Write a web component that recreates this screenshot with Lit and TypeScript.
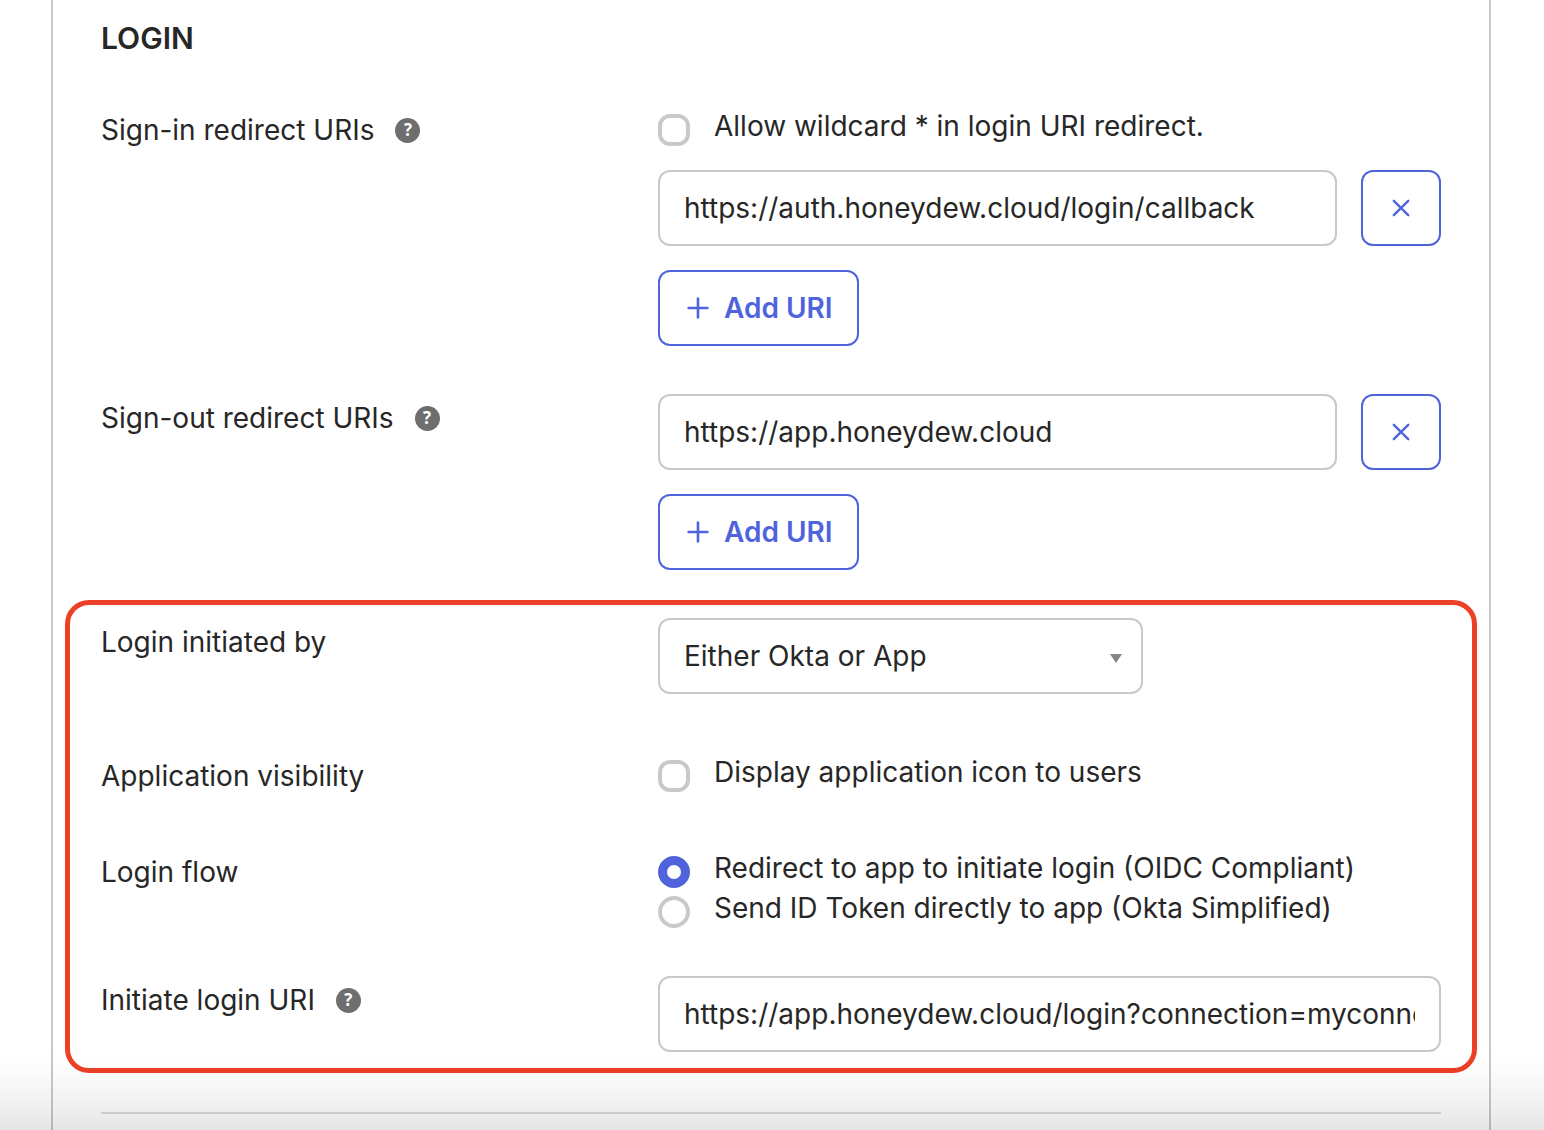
import { LitElement, html, css, svg } from "lit";
import { customElement, property, state } from "lit/decorators.js";

const plusIcon = html`<svg class="plus" viewBox="0 0 28 28" aria-hidden="true">
  ${svg`<path d="M14 3.5v21M3.5 14h21" fill="none" stroke="currentColor" stroke-width="2.6"/>`}
</svg>`;

const closeIcon = html`<svg class="close" viewBox="0 0 20 20" aria-hidden="true">
  ${svg`<path d="M2.8 2.8l14.4 14.4M17.2 2.8L2.8 17.2" fill="none" stroke="currentColor" stroke-width="2.4" stroke-linecap="round"/>`}
</svg>`;

@customElement("help-tip")
class HelpTip extends LitElement {
  @property() topic = "";

  static styles = css`
    :host {
      display: flex;
    }
    .help {
      display: grid;
      place-items: center;
      width: 25px;
      height: 25px;
      padding: 0;
      border: 0;
      border-radius: 50%;
      background: #6e6e6e;
      color: #fff;
      font: 700 17px/24px "Open Sans", "Noto Sans", sans-serif;
      cursor: pointer;
    }
  `;

  render() {
    return html`<button class="help" type="button" aria-label="Help: ${this.topic}">?</button>`;
  }
}

@customElement("app-root")
class AppRoot extends LitElement {
  @state() private signIn = ["https://auth.honeydew.cloud/login/callback"];
  @state() private signOut = ["https://app.honeydew.cloud"];

  static styles = css`
    :host {
      display: block;
      font-family: Inter, "Liberation Sans", sans-serif;
      font-size: 28px;
      line-height: 40px;
      color: #272727;
      background: #fff;
    }
    * {
      box-sizing: border-box;
    }
    .panel {
      min-height: 100vh;
      margin: 0 53px 0 51px;
      padding: 18px 48px 0;
      border: solid #c9c9c9;
      border-width: 0 2px;
    }
    .title {
      margin: 0 0 48px;
      font-size: 30px;
      line-height: 40px;
      font-weight: 600;
    }
    .row {
      display: grid;
      grid-template-columns: minmax(0, 557fr) minmax(0, 783fr);
      margin-bottom: 48px;
    }
    .row.select-row {
      margin-bottom: 58px;
    }
    .row.check-row {
      margin-bottom: 52px;
    }
    .name {
      display: flex;
      align-items: center;
      align-self: start;
      gap: 21px;
      padding-top: 4px;
    }
    .fields {
      display: flex;
      flex-direction: column;
      align-items: flex-start;
      gap: 24px;
    }
    .fields.tight {
      gap: 0;
    }
    .option {
      display: flex;
      align-items: flex-end;
      gap: 24px;
    }
    .tick {
      appearance: none;
      flex: none;
      width: 32px;
      height: 32px;
      margin: 0;
      border: 4px solid #c9c9c9;
      border-radius: 12px;
      background: #fff;
    }
    .tick.round {
      border-radius: 50%;
    }
    .tick:checked {
      border-color: #4f64dc;
      background: #4f64dc;
    }
    .tick.round:checked {
      border-width: 9px;
      background: #fff;
    }
    .uri {
      display: flex;
      gap: 24px;
      width: 100%;
    }
    .box {
      flex: 1;
      width: 100%;
      min-width: 0;
      height: 76px;
      margin: 0;
      padding: 0 24px;
      border: 2px solid #c9c9c9;
      border-radius: 12px;
      background: #fff;
      color: inherit;
      font: inherit;
    }
    .btn {
      display: flex;
      align-items: center;
      justify-content: center;
      gap: 12px;
      height: 76px;
      padding: 0 24px;
      border: 2px solid #4f64dc;
      border-radius: 12px;
      background: #fff;
      color: #4f64dc;
      font: inherit;
      font-weight: 600;
      cursor: pointer;
    }
    .btn.square {
      flex: none;
      width: 80px;
      padding: 0;
    }
    .plus {
      width: 28px;
      height: 28px;
    }
    .close {
      width: 20px;
      height: 20px;
    }
    .picker {
      display: grid;
      align-items: center;
      width: 62%;
    }
    .picker > * {
      grid-area: 1 / 1;
    }
    .picker .box {
      appearance: none;
    }
    .arrow {
      justify-self: end;
      width: 12px;
      height: 14px;
      margin-right: 21px;
      fill: #868686;
      pointer-events: none;
    }
    .highlight {
      margin: -18px -36px 39px;
      padding: 13px 31px 16px;
      border: 5px solid #ec4126;
      border-radius: 24px;
    }
    .highlight .row:last-child {
      margin-bottom: 0;
    }
    .rule {
      height: 2px;
      margin: 0;
      border: 0;
      background: #dcdcdc;
    }
    .fade {
      position: fixed;
      inset: auto 0 0;
      height: 80px;
      background: linear-gradient(
        rgba(0, 0, 0, 0),
        rgba(0, 0, 0, 0.01) 25%,
        rgba(0, 0, 0, 0.05) 65%,
        rgba(0, 0, 0, 0.1)
      );
      pointer-events: none;
    }
  `;

  private uriRows(uris: string[], label: string, update: (next: string[]) => void) {
    return html`
      ${uris.map(
        (uri, i) => html`<div class="uri">
          <input class="box" type="text" aria-label=${label} .value=${uri} />
          <button
            class="btn square"
            type="button"
            aria-label="Remove URI"
            @click=${() => update(uris.filter((_, n) => n !== i))}
          >
            ${closeIcon}
          </button>
        </div>`
      )}
      <button class="btn" type="button" @click=${() => update([...uris, ""])}>
        ${plusIcon}<span>Add URI</span>
      </button>
    `;
  }

  render() {
    return html`
      <main class="panel">
        <h2 class="title">LOGIN</h2>

        <div class="row">
          <div class="name">
            <span>Sign-in redirect URIs</span><help-tip topic="Sign-in redirect URIs"></help-tip>
          </div>
          <div class="fields">
            <label class="option">
              <input class="tick" type="checkbox" />
              <span>Allow wildcard * in login URI redirect.</span>
            </label>
            ${this.uriRows(this.signIn, "Sign-in redirect URI", (v) => (this.signIn = v))}
          </div>
        </div>

        <div class="row">
          <div class="name">
            <span>Sign-out redirect URIs</span><help-tip topic="Sign-out redirect URIs"></help-tip>
          </div>
          <div class="fields">
            ${this.uriRows(this.signOut, "Sign-out redirect URI", (v) => (this.signOut = v))}
          </div>
        </div>

        <section class="highlight">
          <div class="row select-row">
            <div class="name"><label for="initiated">Login initiated by</label></div>
            <div class="picker">
              <select class="box" id="initiated">
                <option>Either Okta or App</option>
              </select>
              <svg class="arrow" viewBox="0 0 12 14" aria-hidden="true">
                ${svg`<path d="M0 5h12L6 14z"/>`}
              </svg>
            </div>
          </div>

          <div class="row check-row">
            <div class="name"><span id="visibility">Application visibility</span></div>
            <div class="fields" role="group" aria-labelledby="visibility">
              <label class="option">
                <input class="tick" type="checkbox" />
                <span>Display application icon to users</span>
              </label>
            </div>
          </div>

          <div class="row">
            <div class="name"><span id="flow">Login flow</span></div>
            <div class="fields tight" role="radiogroup" aria-labelledby="flow">
              <label class="option">
                <input class="tick round" type="radio" name="flow" checked />
                <span>Redirect to app to initiate login (OIDC Compliant)</span>
              </label>
              <label class="option">
                <input class="tick round" type="radio" name="flow" />
                <span>Send ID Token directly to app (Okta Simplified)</span>
              </label>
            </div>
          </div>

          <div class="row">
            <div class="name">
              <label for="initiate">Initiate login URI</label>
              <help-tip topic="Initiate login URI"></help-tip>
            </div>
            <input
              class="box"
              id="initiate"
              type="text"
              .value=${"https://app.honeydew.cloud/login?connection=myconnection"}
            />
          </div>
        </section>

        <hr class="rule" />
      </main>
      <div class="fade"></div>
    `;
  }
}
